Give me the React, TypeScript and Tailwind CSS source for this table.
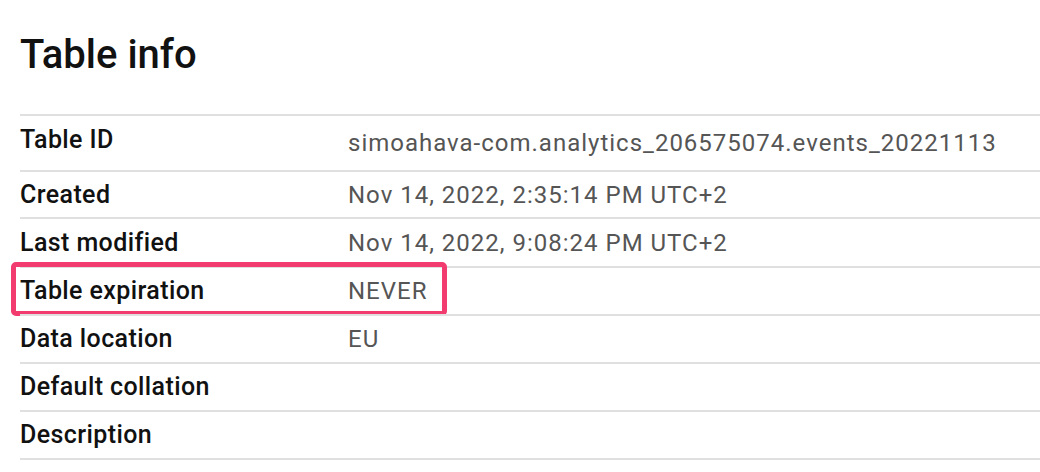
const rows = [
  { label: 'Table ID', value: 'simoahava-com.analytics_206575074.events_20221113', h: 'h-[56px]', labelClass: 'mb-[6px]' },
  { label: 'Created', value: 'Nov 14, 2022, 2:35:14 PM UTC+2', h: 'h-[47px]' },
  { label: 'Last modified', value: 'Nov 14, 2022, 9:08:24 PM UTC+2', h: 'h-[49px]' },
  { label: 'Table expiration', value: 'NEVER', h: 'h-[48px]', highlight: true },
  { label: 'Data location', value: 'EU', h: 'h-[48px]' },
  { label: 'Default collation', value: '', h: 'h-[48px]' },
  { label: 'Description', value: '', h: 'h-[48px]' },
]

export default function App() {
  return (
    <div className="w-[1040px] h-[472px] bg-white overflow-hidden font-['Roboto',_'Liberation_Sans',_sans-serif]">
      <h1 className="pl-[20px] pt-[31px] h-[114px] text-[40px] leading-[48px] font-medium text-[#111]">
        Table info
      </h1>
      <div className="ml-[20px] border-b-2 border-[#e0e0e0]">
        {rows.map((row) => (
          <div key={row.label} className={`relative flex items-center border-t-2 border-[#e0e0e0] ${row.h}`}>
            {row.highlight && (
              <div className="absolute left-[-9px] top-[-6px] w-[436px] h-[54px] border-[5px] border-[#f23b6f] rounded-[5px]" />
            )}
            <div className={`w-[328px] shrink-0 text-[25px] tracking-[0.4px] font-medium text-[#111] ${row.labelClass ?? ''}`}>
              {row.label}
            </div>
            <div className="text-[24px] tracking-[1px] text-[#555]">{row.value}</div>
          </div>
        ))}
      </div>
    </div>
  )
}
